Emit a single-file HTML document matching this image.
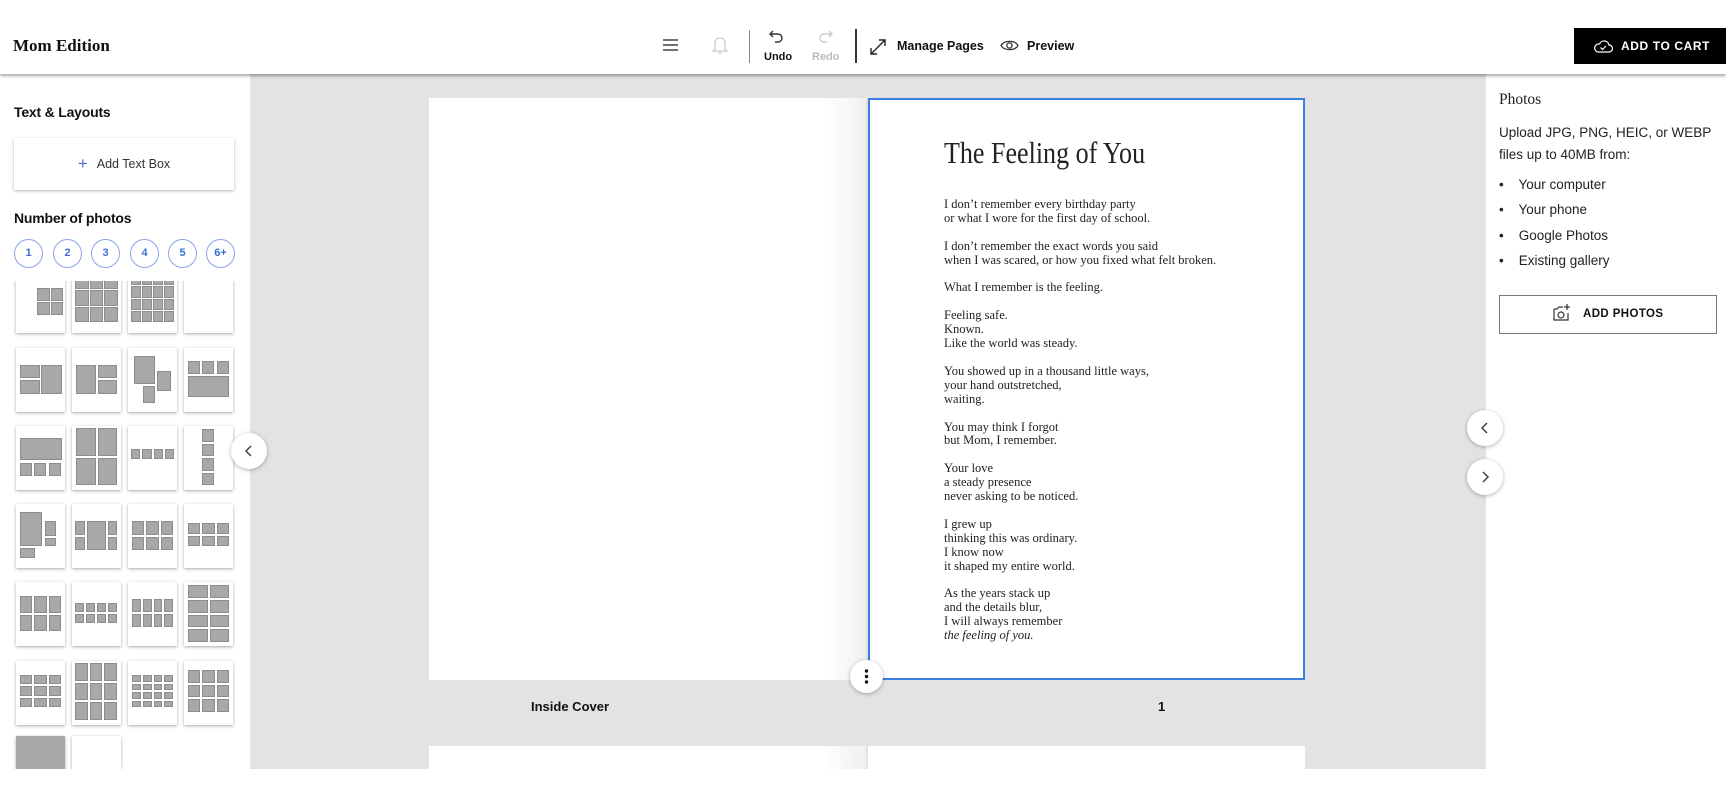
<!DOCTYPE html>
<html><head><meta charset="utf-8">
<style>
*{box-sizing:border-box;margin:0;padding:0}
html,body{width:1726px;height:788px;overflow:hidden}
body{background:#fff;font-family:"Liberation Sans",sans-serif;color:#111;position:relative}
.hdr{position:absolute;left:0;top:0;width:1726px;height:74px;background:#fff;box-shadow:0 2px 3px rgba(0,0,0,.35);z-index:5}
.abs{position:absolute}
.canvas{position:absolute;left:250px;top:74px;width:1236px;height:695px;background:#e3e3e3}
.left{position:absolute;left:0;top:74px;width:250px;height:695px;background:#fff}
.right{position:absolute;left:1486px;top:74px;width:240px;height:695px;background:#fff}
.h{font-weight:bold;font-size:14px;letter-spacing:-.2px}
.circ{position:absolute;top:239px;width:29px;height:29px;border:1.5px solid #8aa6e6;border-radius:50%;color:#3a6fd8;font-size:11px;font-weight:bold;text-align:center;line-height:26px}
.tile{position:absolute;width:49px;height:64px;background:#fff;box-shadow:0 1px 3px rgba(0,0,0,.35)}
.tile i{position:absolute;background:#a8a8a8;border:1px solid #8c8c8c;display:block}
.g{position:absolute;display:grid;gap:2px}
.g b{background:#a8a8a8;border:1px solid #8c8c8c;display:block}
.poem{position:absolute;left:944px;top:198px;font-family:"Liberation Serif",serif;font-size:12.5px;line-height:13.9px;color:#222;white-space:pre}
.navc{position:absolute;width:36px;height:36px;border-radius:50%;background:#fff;box-shadow:0 1px 4px rgba(0,0,0,.3);z-index:3}
</style></head><body>

<div class="hdr">
  <div class="abs" style="left:13px;top:36px;font-family:'Liberation Serif',serif;font-weight:bold;font-size:17px">Mom Edition</div>
  <svg class="abs" style="left:662px;top:38px" width="18" height="14"><path d="M1 2h15M1 7h15M1 12h15" stroke="#444" stroke-width="1.5"/></svg>
  <svg class="abs" style="left:712px;top:36px" width="16" height="20"><path d="M8 2c-3 0-5 2-5 5v6l-2 2h14l-2-2V7c0-3-2-5-5-5zM6 17h4" stroke="#ccc" stroke-width="1.3" fill="none"/></svg>
  <div class="abs" style="left:749px;top:30px;width:1px;height:33px;background:#888"></div>
  <svg class="abs" style="left:769px;top:29px" width="16" height="14"><path d="M4 2L1 5l3 3M1 5h8a4 4 0 010 8H6" stroke="#333" stroke-width="1.4" fill="none"/></svg>
  <div class="abs" style="left:764px;top:51px;font-size:11px;font-weight:bold">Undo</div>
  <svg class="abs" style="left:817px;top:29px" width="16" height="14"><path d="M12 2l3 3-3 3M15 5H7a4 4 0 000 8h3" stroke="#ccc" stroke-width="1.4" fill="none"/></svg>
  <div class="abs" style="left:812px;top:51px;font-size:11px;font-weight:bold;color:#bbb">Redo</div>
  <div class="abs" style="left:855px;top:29px;width:1.5px;height:34px;background:#333"></div>
  <svg class="abs" style="left:869px;top:38px" width="18" height="18"><path d="M2 16L16 2M10 2h6v6M2 10v6h6" stroke="#222" stroke-width="1.4" fill="none"/></svg>
  <div class="abs" style="left:897px;top:39px;font-size:12.5px;font-weight:bold">Manage Pages</div>
  <svg class="abs" style="left:1000px;top:39px" width="19" height="13"><path d="M1 6.5C4 1 15 1 18 6.5 15 12 4 12 1 6.5z" stroke="#333" stroke-width="1.3" fill="none"/><circle cx="9.5" cy="6.5" r="2.6" stroke="#333" stroke-width="1.3" fill="none"/></svg>
  <div class="abs" style="left:1027px;top:39px;font-size:12.5px;font-weight:bold">Preview</div>
  <div class="abs" style="left:1574px;top:28px;width:152px;height:36px;background:#000;color:#fff;font-size:12px;font-weight:bold;letter-spacing:.6px;line-height:36px;padding-left:47px">ADD TO CART</div>
  <svg class="abs" style="left:1593px;top:38px" width="20" height="16"><path d="M5 14h11a3.5 3.5 0 000-7 5 5 0 00-9.5-1A4 4 0 005 14zM7.5 9.5l2 2 3.5-3.5" stroke="#fff" stroke-width="1.2" fill="none"/></svg>
</div>

<div class="left">
  <div class="abs h" style="left:14px;top:30px">Text &amp; Layouts</div>
  <div class="abs" style="left:14px;top:64px;width:220px;height:52px;background:#fff;box-shadow:0 1px 3px rgba(0,0,0,.3);font-size:12.5px;color:#333;text-align:center;line-height:52px"><span style="color:#4a6fd0;font-size:17px;vertical-align:-1px;margin-right:9px">+</span>Add Text Box</div>
  <div class="abs h" style="left:14px;top:136px">Number of photos</div>
</div>
<div class="circ" style="left:14px">1</div>
<div class="circ" style="left:53px">2</div>
<div class="circ" style="left:91px">3</div>
<div class="circ" style="left:130px">4</div>
<div class="circ" style="left:168px">5</div>
<div class="circ" style="left:206px">6+</div>

<div class="abs" style="left:0;top:281px;width:250px;height:488px;overflow:hidden">
<div class="abs" style="left:0;top:-281px;width:250px;height:769px">
 <div class="tile" style="left:16px;top:269px"><div class="g" style="left:21px;top:19px;width:26px;height:27px;grid-template:1fr 1fr/1fr 1fr;gap:1px"><b></b><b></b><b></b><b></b></div></div>
 <div class="tile" style="left:72px;top:269px"><div class="g" style="left:3px;top:5px;width:43px;height:48px;grid-template:repeat(3,1fr)/repeat(3,1fr);gap:1px"><b></b><b></b><b></b><b></b><b></b><b></b><b></b><b></b><b></b></div></div>
 <div class="tile" style="left:128px;top:269px"><div class="g" style="left:3px;top:5px;width:43px;height:48px;grid-template:repeat(4,1fr)/repeat(4,1fr);gap:1px"><b></b><b></b><b></b><b></b><b></b><b></b><b></b><b></b><b></b><b></b><b></b><b></b><b></b><b></b><b></b><b></b></div></div>
 <div class="tile" style="left:184px;top:269px"></div>
 <div class="tile" style="left:16px;top:348px"><i style="left:4px;top:17px;width:20px;height:13px"></i><i style="left:4px;top:32px;width:20px;height:14px"></i><i style="left:25px;top:17px;width:21px;height:29px"></i></div>
 <div class="tile" style="left:72px;top:348px"><i style="left:4px;top:17px;width:20px;height:29px"></i><i style="left:26px;top:17px;width:19px;height:13px"></i><i style="left:26px;top:32px;width:19px;height:14px"></i></div>
 <div class="tile" style="left:128px;top:348px"><i style="left:6px;top:8px;width:21px;height:28px"></i><i style="left:29px;top:23px;width:14px;height:20px"></i><i style="left:15px;top:38px;width:12px;height:17px"></i></div>
 <div class="tile" style="left:184px;top:348px"><i style="left:4px;top:13px;width:12px;height:13px"></i><i style="left:18px;top:13px;width:12px;height:13px"></i><i style="left:33px;top:13px;width:12px;height:13px"></i><i style="left:4px;top:28px;width:41px;height:21px"></i></div>
 <div class="tile" style="left:16px;top:426px"><i style="left:4px;top:12px;width:42px;height:22px"></i><i style="left:4px;top:37px;width:12px;height:13px"></i><i style="left:18px;top:37px;width:12px;height:13px"></i><i style="left:33px;top:37px;width:12px;height:13px"></i></div>
 <div class="tile" style="left:72px;top:426px"><div class="g" style="left:4px;top:2px;width:41px;height:57px;grid-template:1fr 1fr/1fr 1fr"><b></b><b></b><b></b><b></b></div></div>
 <div class="tile" style="left:128px;top:426px"><div class="g" style="left:3px;top:23px;width:43px;height:10px;grid-template:1fr/repeat(4,1fr)"><b></b><b></b><b></b><b></b></div></div>
 <div class="tile" style="left:184px;top:426px"><div class="g" style="left:18px;top:3px;width:12px;height:56px;grid-template:repeat(4,1fr)/1fr"><b></b><b></b><b></b><b></b></div></div>
 <div class="tile" style="left:16px;top:504px"><i style="left:4px;top:8px;width:22px;height:34px"></i><i style="left:29px;top:17px;width:11px;height:15px"></i><i style="left:29px;top:34px;width:11px;height:8px"></i><i style="left:4px;top:44px;width:15px;height:10px"></i></div>
 <div class="tile" style="left:72px;top:504px"><i style="left:3px;top:17px;width:10px;height:14px"></i><i style="left:3px;top:33px;width:10px;height:13px"></i><i style="left:15px;top:17px;width:19px;height:29px"></i><i style="left:36px;top:17px;width:9px;height:14px"></i><i style="left:36px;top:33px;width:9px;height:13px"></i></div>
 <div class="tile" style="left:128px;top:504px"><div class="g" style="left:4px;top:17px;width:41px;height:29px;grid-template:1fr 1fr/repeat(3,1fr)"><b></b><b></b><b></b><b></b><b></b><b></b></div></div>
 <div class="tile" style="left:184px;top:504px"><div class="g" style="left:4px;top:19px;width:41px;height:23px;grid-template:1fr 1fr/repeat(3,1fr)"><b></b><b></b><b></b><b></b><b></b><b></b></div></div>
 <div class="tile" style="left:16px;top:582px"><div class="g" style="left:4px;top:14px;width:41px;height:35px;grid-template:1fr 1fr/repeat(3,1fr)"><b></b><b></b><b></b><b></b><b></b><b></b></div></div>
 <div class="tile" style="left:72px;top:582px"><div class="g" style="left:3px;top:21px;width:42px;height:20px;grid-template:1fr 1fr/repeat(4,1fr)"><b></b><b></b><b></b><b></b><b></b><b></b><b></b><b></b></div></div>
 <div class="tile" style="left:128px;top:582px"><div class="g" style="left:4px;top:17px;width:41px;height:28px;grid-template:1fr 1fr/repeat(4,1fr)"><b></b><b></b><b></b><b></b><b></b><b></b><b></b><b></b></div></div>
 <div class="tile" style="left:184px;top:582px"><div class="g" style="left:4px;top:3px;width:41px;height:57px;grid-template:repeat(4,1fr)/1fr 1fr"><b></b><b></b><b></b><b></b><b></b><b></b><b></b><b></b></div></div>
 <div class="tile" style="left:16px;top:661px"><div class="g" style="left:4px;top:14px;width:41px;height:32px;grid-template:repeat(3,1fr)/repeat(3,1fr)"><b></b><b></b><b></b><b></b><b></b><b></b><b></b><b></b><b></b></div></div>
 <div class="tile" style="left:72px;top:661px"><div class="g" style="left:3px;top:2px;width:42px;height:57px;grid-template:repeat(3,1fr)/repeat(3,1fr)"><b></b><b></b><b></b><b></b><b></b><b></b><b></b><b></b><b></b></div></div>
 <div class="tile" style="left:128px;top:661px"><div class="g" style="left:4px;top:14px;width:41px;height:32px;grid-template:repeat(4,1fr)/repeat(4,1fr)"><b></b><b></b><b></b><b></b><b></b><b></b><b></b><b></b><b></b><b></b><b></b><b></b><b></b><b></b><b></b><b></b></div></div>
 <div class="tile" style="left:184px;top:661px"><div class="g" style="left:4px;top:9px;width:41px;height:42px;grid-template:repeat(3,1fr)/repeat(3,1fr)"><b></b><b></b><b></b><b></b><b></b><b></b><b></b><b></b><b></b></div></div>
 <div class="tile" style="left:16px;top:736px;height:33px;background:#a9a9a9"></div>
 <div class="tile" style="left:72px;top:736px;height:33px"></div>
</div></div>

<div class="canvas"></div>
<div class="abs" style="left:429px;top:98px;width:437px;height:582px;background:linear-gradient(to right,#fff 0,#fff 90%,#f6f6f6 97%,#eeeeee 100%)"></div>
<div class="abs" style="left:868px;top:98px;width:437px;height:582px;background:#fff;border:2px solid #3b7fe0"></div>
<div class="abs" style="left:429px;top:746px;width:437px;height:23px;background:linear-gradient(to right,#fff 0,#fff 90%,#f0f0f0 100%)"></div>
<div class="abs" style="left:868px;top:746px;width:437px;height:23px;background:#fff"></div>
<div class="abs" style="left:531px;top:699px;font-size:13px;font-weight:bold">Inside Cover</div>
<div class="abs" style="left:1158px;top:699px;font-size:13px;font-weight:bold">1</div>

<div class="abs" style="left:944px;top:135px;font-family:'Liberation Serif',serif;font-size:31px;color:#222;transform:scaleX(.84);transform-origin:left top;white-space:nowrap">The Feeling of You</div>
<div class="poem">I don’t remember every birthday party
or what I wore for the first day of school.

I don’t remember the exact words you said
when I was scared, or how you fixed what felt broken.

What I remember is the feeling.

Feeling safe.
Known.
Like the world was steady.

You showed up in a thousand little ways,
your hand outstretched,
waiting.

You may think I forgot
but Mom, I remember.

Your love
a steady presence
never asking to be noticed.

I grew up
thinking this was ordinary.
I know now
it shaped my entire world.

As the years stack up
and the details blur,
I will always remember
<i>the feeling of you.</i></div>

<div class="navc" style="left:231px;top:433px"><svg width="36" height="36"><path d="M20 13l-5 5 5 5" stroke="#444" stroke-width="1.5" fill="none"/></svg></div>
<div class="navc" style="left:1467px;top:410px"><svg width="36" height="36"><path d="M20 13l-5 5 5 5" stroke="#444" stroke-width="1.5" fill="none"/></svg></div>
<div class="navc" style="left:1467px;top:459px"><svg width="36" height="36"><path d="M16 13l5 5-5 5" stroke="#444" stroke-width="1.5" fill="none"/></svg></div>
<div class="navc" style="left:850px;top:660px;width:33px;height:33px"><svg width="33" height="33"><circle cx="16.5" cy="11" r="1.7" fill="#111"/><circle cx="16.5" cy="16.5" r="1.7" fill="#111"/><circle cx="16.5" cy="22" r="1.7" fill="#111"/></svg></div>

<div class="right">
  <div class="abs" style="left:13px;top:17px;font-size:15.5px;color:#222;font-family:'Liberation Serif',serif">Photos</div>
  <div class="abs" style="left:13px;top:48px;font-size:13.5px;line-height:22px;color:#222;width:225px">Upload JPG, PNG, HEIC, or WEBP files up to 40MB from:</div>
  <div class="abs" style="left:13px;top:98px;font-size:13.5px;line-height:25.3px;color:#222">
    <div>•&nbsp;&nbsp;&nbsp; Your computer</div><div>•&nbsp;&nbsp;&nbsp; Your phone</div><div>•&nbsp;&nbsp;&nbsp; Google Photos</div><div>•&nbsp;&nbsp;&nbsp; Existing gallery</div>
  </div>
  <div class="abs" style="left:13px;top:221px;width:218px;height:39px;border:1.5px solid #777;font-size:11.5px;font-weight:bold;letter-spacing:.4px;line-height:36px;padding-left:83px">ADD PHOTOS</div>
  <svg class="abs" style="left:66px;top:229px" width="20" height="20"><path d="M2 6h3l2-2h4M2 6v11h14V10" stroke="#333" stroke-width="1.2" fill="none"/><circle cx="9" cy="12" r="3" stroke="#333" stroke-width="1.2" fill="none"/><path d="M15 1v6M12 4h6" stroke="#333" stroke-width="1.2"/></svg>
</div>
</body></html>
